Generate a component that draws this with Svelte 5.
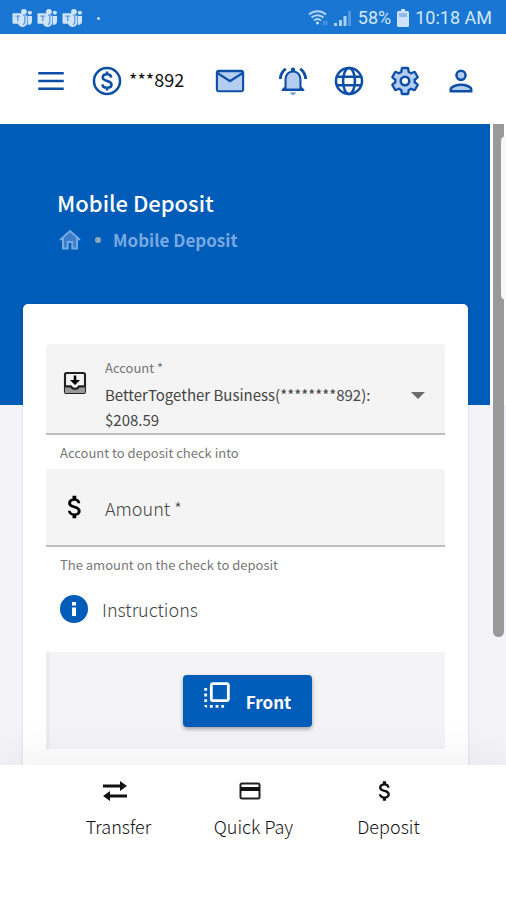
<script>
  const accounts = ["BetterTogether Business(********892): $208.59"];

  let account = $state(accounts[0]);
  let amount = $state("");
</script>

{#snippet dollar()}
  <path
    d="M11.8 10.9c-2.27-.59-3-1.2-3-2.15 0-1.09 1.01-1.85 2.7-1.85 1.78 0 2.44.85 2.5 2.1h2.21c-.07-1.72-1.12-3.3-3.21-3.81V3h-3v2.16c-1.94.42-3.5 1.68-3.5 3.61 0 2.31 1.91 3.46 4.7 4.13 2.5.6 3 1.48 3 2.41 0 .69-.49 1.79-2.7 1.79-2.06 0-2.87-.92-2.98-2.1h-2.2c.12 2.19 1.76 3.42 3.68 3.83V21h3v-2.15c1.95-.37 3.5-1.5 3.5-3.55 0-2.84-2.43-3.81-4.7-4.4z"
  />
{/snippet}

<div class="page">
  <div class="status">
    <div class="status-group">
      {#each [1, 2, 3] as n (n)}
        <svg class="teams" viewBox="0 0 22 20">
          <circle cx="12.5" cy="3.5" r="3" />
          <circle cx="18.7" cy="4.5" r="2.2" />
          <path d="M16.5 8H21v6a3.5 3.5 0 0 1-4.5 3z" />
          <path d="M8 7.5h8V14a5 5 0 0 1-9.5 2.5z" />
          <rect x="0.5" y="5" width="11" height="11" rx="1" />
          <path class="teams-mark" d="M3.5 8h5M6 8v5.5M13.5 8v6c0 1.500-.8 2.500-2 3" />
        </svg>
      {/each}
      <span class="dot"></span>
    </div>
    <div class="status-group right">
      <svg class="wifi" viewBox="0 0 20 18">
        <path d="M1 5.500a13 13 0 0 1 17 0M3.500 8.500a9 9 0 0 1 12 0M6 11.500a5.500 5.500 0 0 1 7 0" />
        <circle cx="9.500" cy="14" r="1.500" />
        <path class="thin" d="M16 12v4M18.500 12v4" />
      </svg>
      <svg class="signal" viewBox="0 0 18 18">
        <path d="M0 17v-3h3v3zM5 17v-6h3v6zM9.500 17V7h3v10z" />
        <path class="dim" d="M14 17V2h3v15z" />
      </svg>
      <span>58%</span>
      <svg class="battery" viewBox="0 0 12 18">
        <path d="M4 0h4v2h2.500A1.500 1.500 0 0 1 12 3.500v13a1.500 1.500 0 0 1-1.500 1.500h-9A1.500 1.500 0 0 1 0 16.500v-13A1.500 1.500 0 0 1 1.500 2H4z" />
        <path class="level" d="M2 4h8v4H2z" />
      </svg>
      <span>10:18 AM</span>
    </div>
  </div>

  <header>
    <div class="header-group account-group">
      <button type="button" aria-label="Menu">
        <svg class="icon line" viewBox="0 0 24 24">
          <path d="M3 6.500h18M3 12h18M3 17.500h18" />
        </svg>
      </button>
      <button type="button" class="balance">
        <svg class="icon line" viewBox="0 0 24 24">
          <circle cx="12" cy="12" r="9.200" />
          <path d="M15 9.600c-.2-1.500-1.400-2.300-3-2.300s-3 .8-3 2.200c0 3.200 6.200 1.700 6.200 5 0 1.500-1.400 2.300-3.200 2.300s-3.100-.9-3.200-2.400M12 5.300v2M12 16.700v2" />
        </svg>
        <span>***892</span>
      </button>
    </div>
    <button type="button" aria-label="Messages">
      <svg class="icon" viewBox="0 0 24 24">
        <path class="tone" d="M3 5h18v14H3z" />
        <path d="M22 6c0-1.100-.9-2-2-2H4c-1.100 0-2 .9-2 2v12c0 1.100.9 2 2 2h16c1.100 0 2-.9 2-2V6zm-1.700-.2L12 11.200 3.700 5.800zM20.500 18.500h-17V7.600L12 13l8.500-5.400z" />
      </svg>
    </button>
    <div class="header-group">
      <button type="button" aria-label="Alerts">
        <svg class="icon" viewBox="0 0 24 24">
          <path class="tone" d="M12 5.500c-2.490 0-4.700 2.020-4.700 5v7h9.400v-7c0-2.480-2.210-5-4.700-5z" />
          <path d="M18 16v-5c0-3.070-1.630-5.640-4.500-6.320V4c0-.83-.67-1.500-1.500-1.500s-1.500.67-1.500 1.500v.68C7.640 5.360 6 7.920 6 11v5l-2 2v1h16v-1l-2-2zm-1.500 1.300h-9V11c0-2.700 1.700-5 4.500-5s4.500 2.300 4.500 5zM7.580 4.080L6.150 2.650C3.750 4.480 2.170 7.300 2.030 10.500h2c.15-2.650 1.510-4.970 3.550-6.420zm12.390 6.420h2c-.15-3.200-1.730-6.020-4.120-7.850l-1.420 1.430c2.020 1.450 3.390 3.770 3.540 6.420z" />
          <path class="soft" d="M12 22c1.100 0 2-.9 2-2h-4c0 1.100.9 2 2 2z" />
        </svg>
      </button>
      <button type="button" aria-label="Language">
        <svg class="icon line" viewBox="0 0 24 24">
          <circle cx="12" cy="12" r="9.200" />
          <ellipse cx="12" cy="12" rx="4.200" ry="9.200" />
          <path d="M3.500 9h17M3.500 15h17" />
        </svg>
      </button>
      <button type="button" aria-label="Settings">
        <svg class="icon line" viewBox="0 0 24 24">
          <path class="tone" d="M19.430 12.980c.04-.32.07-.64.07-.98 0-.34-.03-.66-.07-.98l2.110-1.650c.19-.15.24-.42.12-.64l-2-3.460c-.09-.16-.26-.25-.44-.25-.06 0-.12.01-.17.03l-2.490 1c-.52-.4-1.080-.73-1.690-.98l-.38-2.650C14.460 2.180 14.250 2 14 2h-4c-.25 0-.46.18-.49.42l-.38 2.650c-.61.25-1.170.59-1.690.98l-2.490-1c-.06-.02-.12-.03-.18-.03-.17 0-.34.09-.43.25l-2 3.460c-.13.22-.07.49.12.64l2.110 1.650c-.04.32-.07.65-.07.98 0 .33.03.66.07.98l-2.110 1.650c-.19.15-.24.42-.12.64l2 3.460c.09.16.26.25.44.25.06 0 .12-.01.17-.03l2.490-1c.52.4 1.080.73 1.690.98l.38 2.650c.03.24.24.42.49.42h4c.25 0 .46-.18.49-.42l.38-2.650c.61-.25 1.170-.59 1.690-.98l2.490 1c.06.02.12.03.18.03.17 0 .34-.09.43-.25l2-3.460c.12-.22.07-.49-.12-.64l-2.110-1.650z" transform="translate(1 1) scale(.917)" />
          <circle class="paper" cx="12" cy="12" r="3" />
        </svg>
      </button>
      <button type="button" aria-label="Profile">
        <svg class="icon line" viewBox="0 0 24 24">
          <circle class="tone" cx="12" cy="8" r="3.200" />
          <path class="tone" d="M4.800 19.200V18c0-2.200 4.300-3.300 7.200-3.300s7.200 1.100 7.200 3.300v1.200z" />
        </svg>
      </button>
    </div>
  </header>

  <main>
    <section class="hero">
      <h1>Mobile Deposit</h1>
      <nav class="crumbs" aria-label="Breadcrumb">
        <a href="/" aria-label="Home">
          <svg class="home" viewBox="0 0 24 24">
            <path class="home-fill" d="M12 4l-7 6.300V20h5v-6h4v6h5v-9.700z" />
            <path d="M2 12l10-9 10 9M5 10v10.500h4.700v-6.500h4.600v6.500H19V10" />
          </svg>
        </a>
        <span class="crumb-dot"></span>
        <span>Mobile Deposit</span>
      </nav>
    </section>

    <form class="card">
      <div class="field">
        <svg class="field-icon inbox" viewBox="0 0 24 24">
          <rect class="frame" x="4" y="4" width="16" height="16" rx="1.200" />
          <path class="tray" d="M4 15h4.500c.7 1.300 2 2 3.500 2s2.800-.7 3.500-2H20v5H4z" />
          <path class="frame" d="M4 14.700h4.700c.7 1.300 1.800 2 3.300 2s2.600-.7 3.300-2H20" />
          <path d="M11 6h2v3.500h3l-4 4-4-4h3z" />
        </svg>
        <div class="field-body">
          <label for="account">Account *</label>
          <select id="account" bind:value={account}>
            {#each accounts as name (name)}
              <option value={name}>{name}</option>
            {/each}
          </select>
        </div>
        <svg class="caret" viewBox="0 0 14 7"><path d="M0 0h14L7 7z" /></svg>
      </div>
      <p class="hint">Account to deposit check into</p>

      <div class="field amount">
        <svg class="field-icon" viewBox="0 0 24 24">{@render dollar()}</svg>
        <div class="field-body stack">
          <label for="amount" class:filled={amount !== ""}>Amount *</label>
          <input id="amount" type="text" inputmode="decimal" bind:value={amount} />
        </div>
      </div>
      <p class="hint">The amount on the check to deposit</p>

      <button type="button" class="instructions">
        <svg viewBox="0 0 28 28">
          <circle cx="14" cy="14" r="14" />
          <path d="M12 12.500h4V21h-4zM12 7h4v3.500h-4z" />
        </svg>
        <span>Instructions</span>
      </button>

      <div class="capture">
        <button type="button" class="front">
          <svg viewBox="0 0 24 24">
            <path d="M3 13h2v-2H3v2zm0 4h2v-2H3v2zm2 4v-2H3c0 1.100.89 2 2 2zM3 9h2V7H3v2zm12 12h2v-2h-2v2zm4-18H9c-1.110 0-2 .9-2 2v10c0 1.100.89 2 2 2h10c1.100 0 2-.9 2-2V5c0-1.100-.9-2-2-2zm0 12H9V5h10v10zm-8 6h2v-2h-2v2zm-4 0h2v-2H7v2z" />
          </svg>
          <span>Front</span>
        </button>
      </div>
    </form>

    <div class="scrollbar"></div>
    <div class="edge-handle"></div>
  </main>

  <nav class="tabs">
    <a href="/transfer">
      <svg viewBox="0 0 28 24">
        <path d="M2 5.500h17V2l7 5-7 5V8.500H2zM26 15.500H9V12l-7 5 7 5v-3.500h17z" />
      </svg>
      <span>Transfer</span>
    </a>
    <a href="/quick-pay">
      <svg viewBox="0 0 28 24">
        <rect class="card-line" x="4.500" y="4.500" width="19" height="15" rx="1.500" />
        <path d="M4 8h20v4H4z" />
      </svg>
      <span>Quick Pay</span>
    </a>
    <a href="/deposit">
      <svg viewBox="0 0 24 24">{@render dollar()}</svg>
      <span>Deposit</span>
    </a>
  </nav>
</div>

<style>
  :global(body) {
    margin: 0;
  }

  .page {
    --blue: #005cb9;
    --icon-blue: #0d4fa8;
    --tone: #b5cdf0;
    display: flex;
    flex-direction: column;
    height: 100vh;
    background: #f4f4f8;
    font-family: "Noto Sans CJK SC", "Noto Sans", sans-serif;
  }

  button,
  input,
  select {
    font-family: inherit;
    color: inherit;
    border: none;
    padding: 0;
    background: transparent;
  }

  button,
  select {
    cursor: pointer;
  }

  svg {
    display: block;
    flex: none;
  }

  a {
    color: inherit;
    text-decoration: none;
  }

  /* status bar */
  .status {
    display: flex;
    flex: none;
    justify-content: space-between;
    align-items: center;
    height: 34px;
    padding: 2px 14px 0 12px;
    box-sizing: border-box;
    background: #1976d2;
    color: #d3e6fb;
    font-family: Roboto, sans-serif;
    font-size: 18px;
    line-height: 24px;
  }

  .status-group {
    display: flex;
    align-items: center;
    gap: 4px;
  }

  .status-group.right {
    gap: 6px;
  }

  .status svg {
    fill: #cfe3fa;
  }

  .teams {
    width: 21px;
    height: 20px;
  }

  .teams .teams-mark {
    fill: none;
    stroke: #5a9de2;
    stroke-width: 1.4;
  }

  .dot {
    width: 3px;
    height: 3px;
    margin-left: 10px;
    border-radius: 50%;
    background: #cfe3fa;
  }

  .wifi {
    width: 20px;
    height: 18px;
  }

  .wifi path {
    fill: none;
    stroke: #b4d3f5;
    stroke-width: 2;
  }

  .wifi .thin {
    stroke: #5a9de2;
    stroke-width: 1.5;
  }

  .signal {
    width: 18px;
    height: 18px;
    opacity: 0.8;
  }

  .signal .dim {
    opacity: 0.4;
  }

  .battery {
    width: 12px;
    height: 18px;
  }

  .battery .level {
    fill: #8dbbee;
  }

  /* header */
  header {
    display: flex;
    flex: none;
    justify-content: space-between;
    align-items: center;
    height: 90px;
    padding: 4px 28px 0 34px;
    box-sizing: border-box;
    background: #fff;
    color: #111;
  }

  .header-group {
    display: flex;
    align-items: center;
    gap: 22px;
  }

  .balance {
    display: flex;
    align-items: center;
    gap: 5px;
    font-size: 18px;
    line-height: 24px;
  }

  .balance span {
    padding-bottom: 4px;
  }

  .icon {
    width: 34px;
    height: 34px;
    fill: var(--icon-blue);
  }

  .icon.line {
    fill: none;
    stroke: var(--icon-blue);
    stroke-width: 1.8;
  }

  .icon .tone {
    fill: var(--tone);
  }

  .icon .paper {
    fill: #fff;
  }

  .icon .soft {
    fill: #7fa3d6;
  }

  /* content */
  main {
    position: relative;
    flex: 1;
    min-height: 0;
    overflow: hidden;
  }

  .hero {
    margin-right: 16px;
    padding: 64px 57px 153px;
    background: var(--blue);
    box-shadow: 16px 0 0 #fff;
  }

  h1 {
    margin: 0;
    color: #fff;
    font-size: 22px;
    line-height: 28px;
    font-weight: 500;
  }

  .crumbs {
    display: flex;
    align-items: center;
    margin-top: 12px;
    color: #77a9e2;
    font-size: 17px;
    line-height: 24px;
    font-weight: 700;
  }

  .home {
    width: 26px;
    height: 24px;
    fill: none;
    stroke: #77a9e2;
    stroke-width: 2;
  }

  .home .home-fill {
    fill: #3b7dc8;
    stroke: none;
  }

  .crumb-dot {
    width: 6px;
    height: 6px;
    margin: 0 12px;
    border-radius: 50%;
    background: #8fa9b8;
  }

  .card {
    position: relative;
    margin: -101px 38px 0 23px;
    padding: 40px 23px 200px;
    border-radius: 5px;
    background: #fff;
    box-shadow: 0 0 3px rgba(0, 0, 0, 0.12);
  }

  .field {
    display: flex;
    align-items: center;
    gap: 15px;
    height: 91px;
    padding: 0 20px 0 14px;
    box-sizing: border-box;
    border-bottom: 2px solid #bdbdbd;
    border-radius: 4px 4px 0 0;
    background: #f4f4f4;
    color: #444;
  }

  .field.amount {
    height: 78px;
  }

  .field-icon {
    width: 30px;
    height: 30px;
    fill: #000;
  }

  .inbox {
    margin-bottom: 12px;
  }

  .inbox .frame {
    fill: none;
    stroke: #222;
    stroke-width: 1.7;
  }

  .inbox .tray {
    fill: #999;
  }

  .field-body {
    display: flex;
    flex: 1;
    flex-direction: column;
    min-width: 0;
    padding-top: 12px;
  }

  .field-body label {
    color: #757575;
    font-size: 13px;
    line-height: 20px;
  }

  select {
    width: 100%;
    height: 50px;
    margin-top: 4px;
    appearance: none;
    font-size: 15px;
    line-height: 25px;
    white-space: normal;
    outline: none;
  }

  .caret {
    width: 14px;
    height: 7px;
    margin-top: 14px;
    fill: #6b6b6b;
  }

  .field-body.stack {
    display: grid;
    padding-top: 2px;
  }

  .stack label,
  .stack input {
    grid-area: 1 / 1;
    font-size: 18px;
    line-height: 28px;
    font-weight: 300;
  }

  .stack label {
    color: #444;
  }

  .stack input {
    z-index: 1;
    min-width: 0;
    outline: none;
  }

  .stack label.filled {
    visibility: hidden;
  }

  .hint {
    margin: 0;
    padding: 8px 14px 6px;
    color: #777;
    font-size: 13px;
    line-height: 20px;
  }

  .instructions {
    display: flex;
    align-items: center;
    gap: 14px;
    margin: 14px 0 29px 14px;
    color: #444;
    font-size: 18px;
    line-height: 28px;
    font-weight: 300;
  }

  .instructions svg {
    width: 28px;
    height: 28px;
    fill: var(--blue);
  }

  .instructions path {
    fill: #fff;
  }

  .capture {
    display: flex;
    justify-content: center;
    padding: 23px 0 22px;
    border-left: 4px solid #ececee;
    background: #f4f4f6;
  }

  .front {
    display: flex;
    align-items: flex-start;
    gap: 12px;
    height: 52px;
    padding: 3px 21px 0 17px;
    border-radius: 4px;
    background: var(--blue);
    box-shadow: 0 2px 4px rgba(0, 0, 0, 0.35);
    color: #fff;
    font-size: 17px;
    line-height: 48px;
    font-weight: 700;
  }

  .front svg {
    width: 34px;
    height: 34px;
    fill: #fff;
  }

  /* scroll thumb and side panel handle float over the page */
  .scrollbar {
    position: absolute;
    top: 0;
    right: 2px;
    width: 11px;
    height: 80%;
    border-radius: 0 0 6px 6px;
    background: #999;
  }

  .edge-handle {
    position: absolute;
    top: 12px;
    right: 0;
    width: 5px;
    height: 164px;
    border-radius: 5px 0 0 5px;
    background: #f8f8f8;
  }

  /* bottom tabs */
  .tabs {
    position: relative;
    display: grid;
    flex: none;
    grid-template-columns: repeat(3, 1fr);
    height: 135px;
    padding: 13px 50px 0 51px;
    box-sizing: border-box;
    background: #fff;
    box-shadow: 0 -8px 40px rgba(0, 0, 0, 0.06);
    color: #111;
    font-size: 18px;
    line-height: 28px;
    font-weight: 300;
  }

  .tabs a {
    display: flex;
    flex-direction: column;
    align-items: center;
    gap: 8px;
  }

  .tabs svg {
    width: 28px;
    height: 26px;
    margin-right: 8px;
    fill: #111;
  }

  .tabs .card-line {
    fill: none;
    stroke: #222;
    stroke-width: 2;
  }
</style>
